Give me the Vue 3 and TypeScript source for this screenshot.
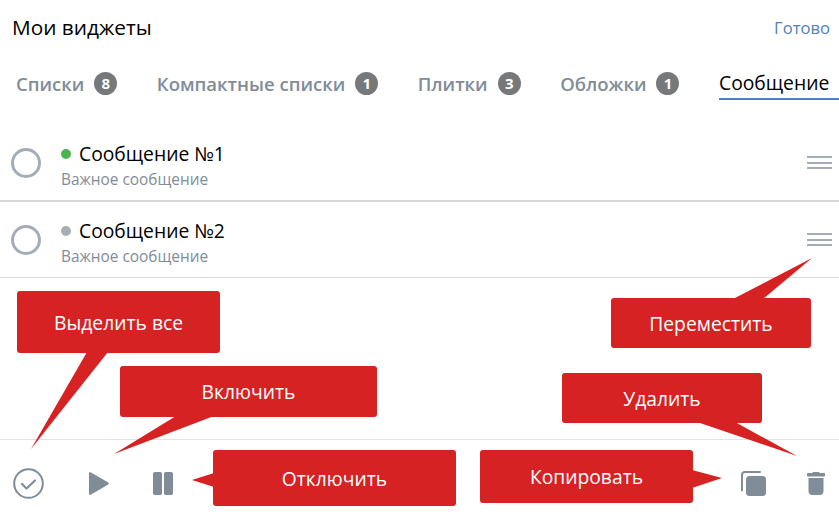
<script setup lang="ts">
interface Tab {
  label: string;
  count?: number;
  active?: boolean;
}
interface Message {
  title: string;
  note: string;
  on: boolean;
}
interface Callout {
  label: string;
  name: string;
  tail: string;
}

const tabs: Tab[] = [
  { label: 'Списки', count: 8 },
  { label: 'Компактные списки', count: 1 },
  { label: 'Плитки', count: 3 },
  { label: 'Обложки', count: 1 },
  { label: 'Сообщение', active: true }
]

const messages: Message[] = [
  { title: 'Сообщение №1', note: 'Важное сообщение', on: true },
  { title: 'Сообщение №2', note: 'Важное сообщение', on: false }
]

// подсказки поверх экрана, хвосты в координатах страницы
const callouts: Callout[] = [
  { label: 'Выделить все', name: 'selectAll', tail: '87,352 108,352 31,449' },
  { label: 'Включить', name: 'enable', tail: '176,416 214,416 114,454' },
  { label: 'Отключить', name: 'disable', tail: '214,473 214,487 192,480' },
  { label: 'Копировать', name: 'copy', tail: '692,470 692,488 722,478' },
  { label: 'Удалить', name: 'remove', tail: '697,422 735,422 797,456' },
  { label: 'Переместить', name: 'move', tail: '733,299 763,299 812,258' }
]
</script>

<template>
  <div class="page">
    <header class="header">
      <h1 class="title">Мои виджеты</h1>
      <a class="done">Готово</a>
    </header>

    <nav class="tabs">
      <div v-for="tab in tabs" :key="tab.label" class="tab" :class="{ active: tab.active }">
        <span>{{ tab.label }}</span>
        <span v-if="tab.count" class="count">{{ tab.count }}</span>
      </div>
    </nav>

    <section class="list">
      <div v-for="item in messages" :key="item.title" class="row">
        <span class="radio"></span>
        <div class="text">
          <div class="name">
            <span class="dot" :class="{ on: item.on }"></span>
            {{ item.title }}
          </div>
          <div class="note">{{ item.note }}</div>
        </div>
        <span class="handle"><i></i><i></i><i></i></span>
      </div>
    </section>

    <footer class="toolbar">
      <div class="tools left">
        <svg width="31" height="31" viewBox="0 0 31 31" fill="none" stroke="#818c99">
          <circle cx="15.500" cy="15.500" r="14.300" stroke-width="2" />
          <path d="M9 16l4.500 4.500 8.500-8" stroke-width="2.200" stroke-linecap="round" stroke-linejoin="round" />
        </svg>
        <svg width="20" height="23" viewBox="0 0 20 23" fill="#818c99">
          <path d="M1.600.3l17.700 10.200c.7.400.7 1.600 0 2L1.600 22.700c-.7.400-1.600 0-1.600-.8V1.100C0 .3.900-.1 1.600.3z" />
        </svg>
        <svg width="20" height="23" viewBox="0 0 20 23" fill="#818c99">
          <rect x="0" y="0" width="9" height="23" rx="1.800" />
          <rect x="11" y="0" width="9" height="23" rx="1.800" />
        </svg>
      </div>
      <div class="tools right">
        <svg width="25" height="25" viewBox="0 0 25 25" fill="none">
          <path d="M1 19.500V4A3 3 0 0 1 4 1h15" stroke="#818c99" stroke-width="2" stroke-linecap="round" />
          <rect x="5" y="5" width="20" height="20" rx="3.500" fill="#818c99" />
        </svg>
        <svg width="18" height="23" viewBox="0 0 18 23" fill="#818c99">
          <path d="M6.500 0h5c.6 0 1 .4 1 1h4.500c.6 0 1 .4 1 1v1.500c0 .6-.4 1-1 1H1c-.6 0-1-.4-1-1V2c0-.6.4-1 1-1h4.500c0-.6.4-1 1-1z" />
          <path d="M1.500 6h15v13c0 2.500-1.500 4-4 4h-7c-2.500 0-4-1.500-4-4z" />
        </svg>
      </div>
    </footer>

    <svg class="tails" width="839" height="523" viewBox="0 0 839 523">
      <polygon v-for="c in callouts" :key="c.name" :points="c.tail" fill="#d62222" />
    </svg>
    <div v-for="c in callouts" :key="c.name" class="callout" :class="c.name">{{ c.label }}</div>
  </div>
</template>

<style scoped>
.page {
  position: relative;
  width: 839px;
  height: 523px;
  overflow: hidden;
  background: #fff;
  color: #000;
  font-family: "Open Sans", "Noto Sans", sans-serif;
}

.header {
  display: flex;
  justify-content: space-between;
  align-items: center;
  height: 54px;
  padding: 0 9px 0 12px;
}

.title {
  margin: 0;
  font-size: 20.800px;
  font-weight: 400;
}

.done {
  color: #5181b8;
  font-size: 16.600px;
}

.tabs {
  display: flex;
  gap: 39.500px;
  height: 46px;
  padding-left: 16px;
  white-space: nowrap;
}

.tab {
  display: flex;
  align-items: center;
  gap: 10px;
  height: 46px;
  padding-top: 12px;
  box-sizing: border-box;
  color: #818c99;
  font-size: 18.500px;
  font-weight: 600;
}

.tab.active {
  flex: 1;
  padding-top: 13px;
  color: #000;
  font-size: 19.300px;
  font-weight: 400;
  border-bottom: 2px solid #5181b8;
}

.count {
  display: flex;
  justify-content: center;
  align-items: center;
  width: 23px;
  height: 23px;
  border-radius: 50%;
  background: #76787a;
  color: #fff;
  font-size: 15px;
  font-weight: 700;
}

.list {
  padding-top: 25px;
}

.row {
  display: flex;
  align-items: center;
  height: 75px;
  padding: 0 7px 0 11px;
  border-bottom: 2px solid #d7d8d9;
}

.row + .row {
  border-bottom-width: 1px;
}

.radio {
  width: 24px;
  height: 24px;
  margin-right: 20px;
  border: 3px solid #a3adb8;
  border-radius: 50%;
}

.text {
  flex: 1;
  padding-top: 8px;
}

.name {
  display: flex;
  align-items: center;
  font-size: 19.300px;
  line-height: 26px;
}

.dot {
  width: 10px;
  height: 10px;
  margin-right: 8px;
  border-radius: 50%;
  background: #a8adb3;
}

.dot.on {
  background: #4bb34b;
}

.note {
  color: #818c99;
  font-size: 15.400px;
  line-height: 26px;
}

.handle {
  display: flex;
  flex-direction: column;
  gap: 3.500px;
  width: 25px;
}

.handle i {
  height: 2px;
  background: #a3adb8;
}

.toolbar {
  position: absolute;
  left: 0;
  right: 0;
  top: 439px;
  display: flex;
  justify-content: space-between;
  align-items: center;
  height: 84px;
  border-top: 1px solid #e1e3e6;
  box-sizing: border-box;
  padding: 4px 14px 0 13px;
}

.tools {
  display: flex;
  align-items: center;
}

.tools.left {
  gap: 44.500px;
}

.tools.right {
  gap: 41px;
}

.tails {
  position: absolute;
  left: 0;
  top: 0;
}

.callout {
  position: absolute;
  display: flex;
  justify-content: center;
  align-items: center;
  border-radius: 3px;
  background: #d62222;
  color: #fff;
  font-size: 19.300px;
}

.selectAll { left: 17px; top: 291px; width: 203px; height: 62px; }
.enable { left: 120px; top: 366px; width: 257px; height: 51px; }
.disable { left: 213px; top: 450px; width: 243px; height: 56px; }
.copy { left: 480px; top: 450px; width: 213px; height: 53px; }
.remove { left: 562px; top: 373px; width: 200px; height: 50px; }
.move { left: 611px; top: 298px; width: 200px; height: 50px; }
</style>
